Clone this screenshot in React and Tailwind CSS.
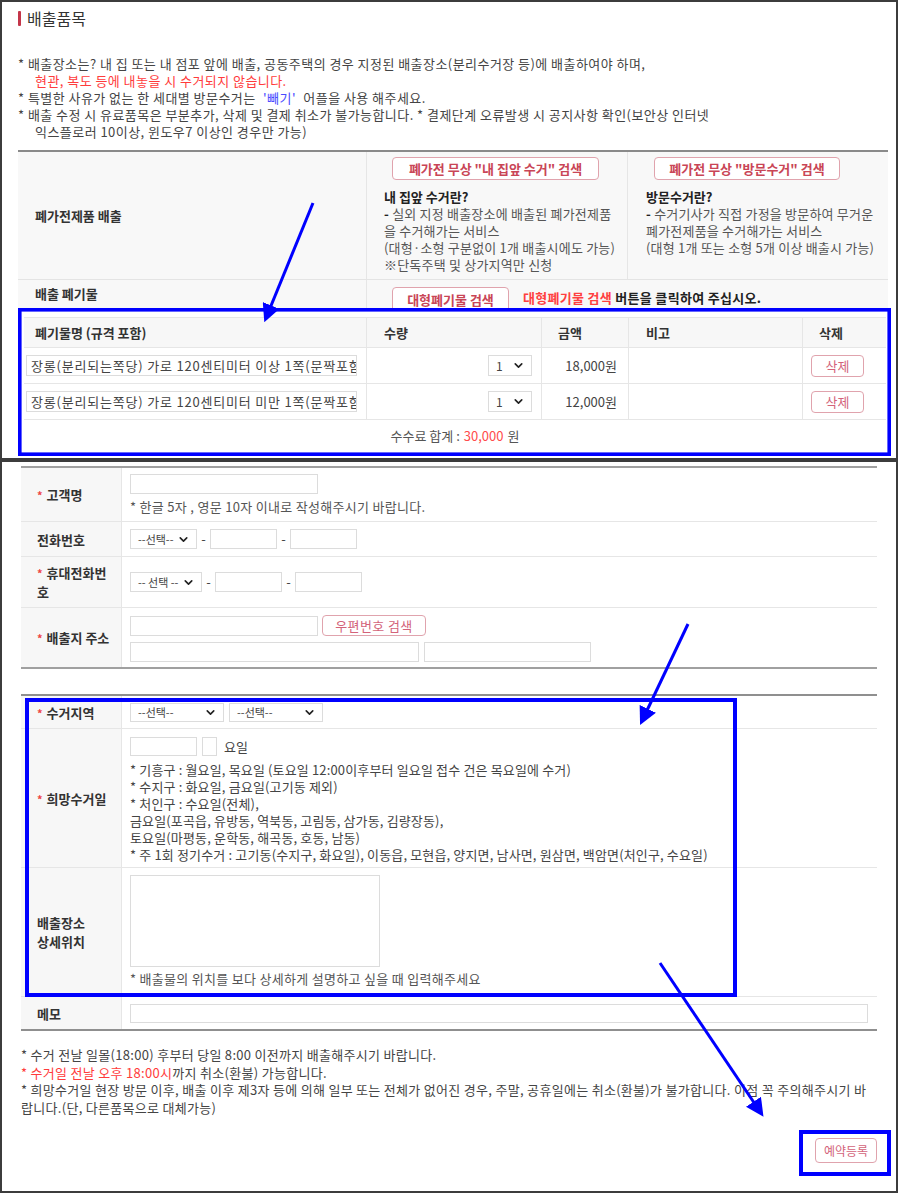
import { ChevronDown } from "lucide-react";

const Box = ({ className = "", children }) => (
  <div className={`border border-[#dcdcdc] bg-white ${className}`}>{children}</div>
);

const Select = ({ label, className = "", small }) => (
  <div className={`flex items-center justify-between border border-[#dcdcdc] bg-white pl-[7px] pr-[6px] text-[#444] ${small ? "text-[11px]" : "text-[12px]"} ${className}`}>
    <span>{label}</span>
    <ChevronDown className="w-[13px] h-[13px] text-[#222]" strokeWidth={3} />
  </div>
);

const PinkBtn = ({ children, className = "" }) => (
  <div className={`flex items-center justify-center rounded-[4px] border border-[#e0a3ad] bg-white ${className}`}>
    {children}
  </div>
);

const Req = () => <span className="text-[#ee4444] text-[11px] leading-[11px] mr-[4px]">*</span>;

function Row({ label, required, h, children, last, thClass = "", tdClass = "" }) {
  return (
    <div className={`flex ${last ? "" : "border-b border-[#e6e6e6]"}`} style={{ height: h }}>
      <div className={`w-[101px] shrink-0 bg-[#f7f7f7] border-r border-[#e6e6e6] flex items-center pl-[16px] text-[13px] font-bold text-[#333] leading-[19px] ${thClass}`}>
        <div>
          {required && <Req />}
          {label}
        </div>
      </div>
      <div className={`flex-1 pl-[8px] ${tdClass}`}>{children}</div>
    </div>
  );
}

export default function App() {
  return (
    <div className="relative w-[900px] h-[1193px] bg-white overflow-hidden font-['Noto_Sans_CJK_KR',sans-serif] text-[#444]">
      {/* Screenshot 1 */}
      <div className="w-[898px] h-[460px] border-2 border-[#3c3c3c] overflow-hidden">
        <div className="mt-[8px] ml-[16px] flex items-center gap-[6px]">
          <div className="w-[3px] h-[15px] rounded-[1px] bg-[#c4364a]" />
          <div className="text-[16px] leading-[16px] text-[#333]">배출품목</div>
        </div>

        <div className="mt-[29px] ml-[16px] text-[13px] leading-[17px] tracking-[0.45px] text-[#444] whitespace-nowrap">
          <div>* 배출장소는? 내 집 또는 내 점포 앞에 배출, 공동주택의 경우 지정된 배출장소(분리수거장 등)에 배출하여야 하며,</div>
          <div className="pl-[17px] text-[#ff3b3b]">현관, 복도 등에 내놓을 시 수거되지 않습니다.</div>
          <div>
            * 특별한 사유가 없는 한 세대별 방문수거는 <span className="ml-[4px] mr-[4px] text-[#4b4bff]">'빼기'</span> 어플을 사용 해주세요.
          </div>
          <div>* 배출 수정 시 유료품목은 부분추가, 삭제 및 결제 취소가 불가능합니다. * 결제단계 오류발생 시 공지사항 확인(보안상 인터넷</div>
          <div className="pl-[17px]">익스플로러 10이상, 윈도우7 이상인 경우만 가능)</div>
        </div>

        <div className="mt-[10px] ml-[16px] w-[870px] border-t-2 border-[#8a8a8a]">
          <div className="flex h-[128px] bg-[#f8f8f8] border-b border-[#e4e4e4]">
            <div className="w-[348px] flex items-center pl-[17px] text-[13px] font-bold text-[#333]">폐가전제품 배출</div>
            <div className="w-[261px] border-l border-[#e6e6e6] pl-[17px] pt-[5px] text-[13px] leading-[17px]">
              <PinkBtn className="ml-[8px] w-[207px] h-[23px] text-[13px] font-bold text-[#c94556]">폐가전 무상 "내 집앞 수거" 검색</PinkBtn>
              <div className="mt-[8px] font-bold text-[#222]">내 집앞 수거란?</div>
              <div className="text-[#555] whitespace-nowrap tracking-[0.2px]">
                <div><b className="text-[#222]">-</b> 실외 지정 배출장소에 배출된 폐가전제품</div>
                <div>을 수거해가는 서비스</div>
                <div>(대형·소형 구분없이 1개 배출시에도 가능)</div>
                <div>※단독주택 및 상가지역만 신청</div>
              </div>
            </div>
            <div className="flex-1 border-l border-[#e6e6e6] pl-[18px] pt-[5px] text-[13px] leading-[17px]">
              <PinkBtn className="ml-[8px] w-[186px] h-[23px] text-[13px] font-bold text-[#c94556]">폐가전 무상 "방문수거" 검색</PinkBtn>
              <div className="mt-[8px] font-bold text-[#222]">방문수거란?</div>
              <div className="text-[#555] whitespace-nowrap tracking-[0.2px]">
                <div><b className="text-[#222]">-</b> 수거기사가 직접 가정을 방문하여 무거운</div>
                <div>폐가전제품을 수거해가는 서비스</div>
                <div>(대형 1개 또는 소형 5개 이상 배출시 가능)</div>
              </div>
            </div>
          </div>
          <div className="flex h-[28px] bg-[#f8f8f8] overflow-hidden">
            <div className="w-[348px] flex items-center pl-[17px] text-[13px] font-bold text-[#333]">배출 폐기물</div>
            <div className="flex-1 border-l border-[#e6e6e6] pl-[25px] pt-[7px] flex items-start gap-[14px]">
              <PinkBtn className="w-[117px] h-[26px] text-[13px] font-bold text-[#c94556]">대형폐기물 검색</PinkBtn>
              <div className="text-[13px] font-bold leading-[17px] pt-[2px] whitespace-nowrap tracking-[0.3px]">
                <span className="text-[#ff4040]">대형폐기물 검색</span> <span className="text-[#222]">버튼을 클릭하여 주십시오.</span>
              </div>
            </div>
          </div>

          {/* waste sub-table */}
          <div className="mt-[9px] ml-[6px] w-[862px] text-[13px]">
            <div className="flex h-[31px] bg-[#f7f7f7] border-t border-b border-[#e6e6e6] font-bold text-[#333] items-stretch">
              <div className="w-[342px] flex items-center pl-[11px]">폐기물명 (규격 포함)</div>
              <div className="w-[175px] border-l border-[#e6e6e6] flex items-center pl-[17px]">수량</div>
              <div className="w-[87px] border-l border-[#e6e6e6] flex items-center pl-[16px]">금액</div>
              <div className="w-[174px] border-l border-[#e6e6e6] flex items-center pl-[17px]">비고</div>
              <div className="flex-1 border-l border-[#e6e6e6] flex items-center pl-[16px]">삭제</div>
            </div>
            {[
              ["장롱(분리되는쪽당) 가로 120센티미터 이상 1쪽(문짝포함)", "18,000원"],
              ["장롱(분리되는쪽당) 가로 120센티미터 미만 1쪽(문짝포함)", "12,000원"],
            ].map(([name, price]) => (
              <div key={name} className="flex h-[36px] border-b border-[#e6e6e6] items-stretch">
                <div className="w-[342px] flex items-center pl-[2px]">
                  <Box className="w-[331px] h-[21px] pl-[4px] leading-[19px] overflow-hidden whitespace-nowrap text-[#444] tracking-[0.8px]">{name}</Box>
                </div>
                <div className="w-[175px] border-l border-[#e6e6e6] flex items-center justify-end pr-[9px]">
                  <Select label="1" className="w-[44px] h-[21px]" />
                </div>
                <div className="w-[87px] border-l border-[#e6e6e6] flex items-center justify-end pr-[11px] text-[#444]">{price}</div>
                <div className="w-[174px] border-l border-[#e6e6e6]" />
                <div className="flex-1 border-l border-[#e6e6e6] flex items-center pl-[8px]">
                  <PinkBtn className="w-[53px] h-[22px] text-[13px] text-[#d3637a]">삭제</PinkBtn>
                </div>
              </div>
            ))}
            <div className="h-[31px] flex items-center justify-center text-[#555]">
              수수료 합계 : <span className="text-[#ff4b4b] ml-[4px] mr-[4px]">30,000</span> 원
            </div>
          </div>
        </div>
      </div>

      {/* Screenshot 2 */}
      <div className="w-[898px] h-[733px] border-2 border-[#3c3c3c]">
        <div className="mt-[4px] ml-[19px] w-[856px] border-t-2 border-b-2 border-[#a0a0a0]">
          <Row label="고객명" required h={54} tdClass="pt-[6px]">
            <Box className="w-[188px] h-[20px]" />
            <div className="mt-[4px] text-[13px] leading-[17px] tracking-[0.3px] text-[#555]">* 한글 5자 , 영문 10자 이내로 작성해주시기 바랍니다.</div>
          </Row>
          <Row label="전화번호" h={35} tdClass="flex items-center">
            <Select label="--선택--" small className="w-[67px] h-[20px]" />
            <span className="w-[13px] text-center text-[13px]">-</span>
            <Box className="w-[67px] h-[20px]" />
            <span className="w-[13px] text-center text-[13px]">-</span>
            <Box className="w-[67px] h-[20px]" />
          </Row>
          <Row label="휴대전화번호" required h={51} tdClass="flex items-center" thClass="pr-[6px]">
            <Select label="-- 선택 --" small className="w-[72px] h-[20px]" />
            <span className="w-[13px] text-center text-[13px]">-</span>
            <Box className="w-[67px] h-[20px]" />
            <span className="w-[13px] text-center text-[13px]">-</span>
            <Box className="w-[67px] h-[20px]" />
          </Row>
          <Row label="배출지 주소" required h={59} last tdClass="pt-[7px]">
            <div className="flex items-center gap-[4px]">
              <Box className="w-[188px] h-[20px]" />
              <PinkBtn className="w-[104px] h-[21px] text-[13px] text-[#d3637a] tracking-[0.4px]">우편번호 검색</PinkBtn>
            </div>
            <div className="mt-[6px] flex gap-[5px]">
              <Box className="w-[289px] h-[20px]" />
              <Box className="w-[167px] h-[20px]" />
            </div>
          </Row>
        </div>

        <div className="mt-[25px] ml-[19px] w-[856px] border-t-2 border-b-2 border-[#8f8f8f]">
          <Row label="수거지역" required h={33} tdClass="flex items-center gap-[5px]">
            <Select label="--선택--" small className="w-[94px] h-[19px]" />
            <Select label="--선택--" small className="w-[94px] h-[19px]" />
          </Row>
          <Row label="희망수거일" required h={139} tdClass="pt-[8px]">
            <div className="flex items-center gap-[5px]">
              <Box className="w-[67px] h-[19px]" />
              <Box className="w-[15px] h-[19px]" />
              <span className="ml-[2px] text-[13px] text-[#444]">요일</span>
            </div>
            <div className="mt-[4px] text-[13px] leading-[17px] tracking-[0.15px] text-[#444] whitespace-nowrap">
              <div>* 기흥구 : 월요일, 목요일 (토요일 12:00이후부터 일요일 접수 건은 목요일에 수거)</div>
              <div>* 수지구 : 화요일, 금요일(고기동 제외)</div>
              <div>* 처인구 : 수요일(전체),</div>
              <div>금요일(포곡읍, 유방동, 역북동, 고림동, 삼가동, 김량장동),</div>
              <div>토요일(마평동, 운학동, 해곡동, 호동, 남동)</div>
              <div>* 주 1회 정기수거 : 고기동(수지구, 화요일), 이동읍, 모현읍, 양지면, 남사면, 원삼면, 백암면(처인구, 수요일)</div>
            </div>
          </Row>
          <Row label={<>배출장소<br />상세위치</>} h={129} tdClass="pt-[7px]">
            <Box className="w-[250px] h-[92px]" />
            <div className="mt-[3px] text-[13px] leading-[17px] tracking-[0.3px] text-[#555]">* 배출물의 위치를 보다 상세하게 설명하고 싶을 때 입력해주세요</div>
          </Row>
          <Row label="메모" h={32} last tdClass="flex items-center">
            <Box className="w-[738px] h-[19px]" />
          </Row>
        </div>

        <div className="mt-[15px] ml-[19px] text-[13px] leading-[17.5px] tracking-[0.3px] text-[#444] whitespace-nowrap">
          <div>* 수거 전날 일몰(18:00) 후부터 당일 8:00 이전까지 배출해주시기 바랍니다.</div>
          <div><span className="text-[#ff3b3b]">* 수거일 전날 오후 18:00시</span>까지 취소(환불) 가능합니다.</div>
          <div>* 희망수거일 현장 방문 이후, 배출 이후 제3자 등에 의해 일부 또는 전체가 없어진 경우, 주말, 공휴일에는 취소(환불)가 불가합니다. 이점 꼭 주의해주시기 바</div>
          <div>랍니다.(단, 다른품목으로 대체가능)</div>
        </div>

        <div className="mt-[22px] mr-[19px] flex justify-end">
          <PinkBtn className="w-[62px] h-[25px] text-[12px] text-[#d3637a]">예약등록</PinkBtn>
        </div>
      </div>

      {/* annotation overlay */}
      <svg className="absolute left-0 top-0 pointer-events-none" width="900" height="1193" viewBox="0 0 900 1193">
        <defs>
          <marker id="ah" markerWidth="6" markerHeight="6" refX="4.5" refY="3" orient="auto" markerUnits="strokeWidth">
            <path d="M0,0 L6,3 L0,6 Z" fill="#0000ff" />
          </marker>
        </defs>
        <g stroke="#0000ff" fill="none">
          <rect x="19.8" y="309.8" width="869.4" height="144.4" strokeWidth="3.6" />
          <rect x="27" y="700" width="708" height="295" strokeWidth="4" />
          <rect x="801" y="1132" width="88" height="42" strokeWidth="4" />
          <line x1="313" y1="203" x2="266" y2="318" strokeWidth="3" markerEnd="url(#ah)" />
          <line x1="688" y1="624" x2="642" y2="721" strokeWidth="3" markerEnd="url(#ah)" />
          <line x1="660" y1="963" x2="761" y2="1113" strokeWidth="3" markerEnd="url(#ah)" />
        </g>
      </svg>
    </div>
  );
}
